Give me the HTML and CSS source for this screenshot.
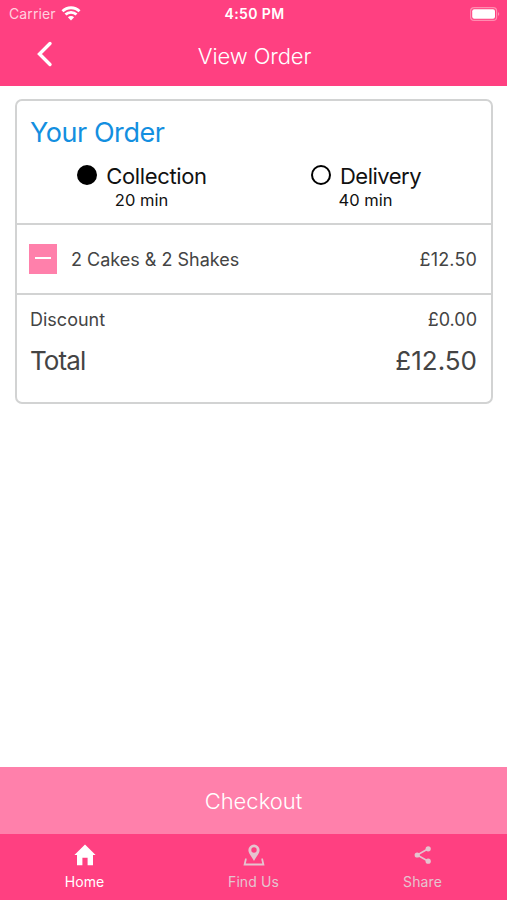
FILE: index.html
```html
<!DOCTYPE html>
<html lang="en">
<head>
    <meta charset="UTF-8">
    <meta name="viewport" content="width=device-width, initial-scale=1.0">
    <title>View Order</title>
    <link rel="stylesheet" href="styles.css">
</head>
<body>
    <header class="header">
        <div class="status">
            <div class="carrier">
                <span>Carrier</span>
                <svg width="20" height="15" viewBox="0 0 20 15" fill="none" stroke="#fff" stroke-width="2.8">
                    <path d="M1.5 5.3 A12 12 0 0 1 18.5 5.3"/>
                    <path d="M4.5 8.6 A7.8 7.8 0 0 1 15.5 8.6"/>
                    <path d="M10 14.4 L6.9 11.3 A4.4 4.4 0 0 1 13.1 11.3 Z" fill="#fff" stroke="none"/>
                </svg>
            </div>
            <div class="time">4:50 PM</div>
            <div class="battery">
                <svg width="30" height="14" viewBox="0 0 30 14">
                    <rect x="0.6" y="0.6" width="26" height="12.8" rx="3.5" fill="none" stroke="#ff8db0" stroke-width="1.2"/>
                    <rect x="2.2" y="2.2" width="22.8" height="9.6" rx="2" fill="#fff"/>
                    <path d="M28 5 Q30.5 7 28 9 Z" fill="#ff8db0"/>
                </svg>
            </div>
        </div>
        <div class="title-bar">
            <button class="back">
                <svg width="16" height="26" viewBox="0 0 16 26" fill="none" stroke="#fff" stroke-width="3.4" stroke-linecap="round">
                    <path d="M13 2.5 L2.5 13 L13 23.5"/>
                </svg>
            </button>
            <h1>View Order</h1>
        </div>
    </header>

    <main class="content">
        <div class="card">
            <section class="order">
                <h2>Your Order</h2>
                <div class="options">
                    <div class="option collection">
                        <div class="choice"><span class="radio checked"></span>Collection</div>
                        <div class="wait">20 min</div>
                    </div>
                    <div class="option delivery">
                        <div class="choice"><span class="radio"></span>Delivery</div>
                        <div class="wait">40 min</div>
                    </div>
                </div>
            </section>
            <section class="item">
                <button class="remove"><span class="minus"></span></button>
                <span class="name">2 Cakes &amp; 2 Shakes</span>
                <span class="price">£12.50</span>
            </section>
            <section class="totals">
                <div class="row"><span>Discount</span><span>£0.00</span></div>
                <div class="row total"><span>Total</span><span class="sum">£12.50</span></div>
            </section>
        </div>
    </main>

    <button class="checkout">Checkout</button>

    <nav class="tabs">
        <a class="tab active">
            <svg width="22" height="22" viewBox="0 0 22 22" fill="currentColor">
                <path d="M11 0.5 L21.6 11 H19 V21.2 H13.6 V13.8 H8.4 V21.2 H3 V11 H0.4 Z"/>
            </svg>
            <span>Home</span>
        </a>
        <a class="tab">
            <svg width="22" height="22" viewBox="0 0 22 22">
                <path d="M11 0.5 A5.6 5.6 0 0 1 16.6 6.1 C16.6 9.5 13.5 12.5 11 17 C8.5 12.5 5.4 9.5 5.4 6.1 A5.6 5.6 0 0 1 11 0.5 Z M11 3.3 A2.7 2.7 0 1 0 11 8.7 A2.7 2.7 0 1 0 11 3.3 Z" fill="currentColor" fill-rule="evenodd"/>
                <path d="M3.6 15.3 H2.8 L1.6 20.5 H20.4 L19.2 15.3 H18.4" fill="none" stroke="currentColor" stroke-width="1.8"/>
            </svg>
            <span>Find Us</span>
        </a>
        <a class="tab">
            <svg width="22" height="22" viewBox="0 0 22 22" fill="currentColor">
                <path d="M16.2 4.8 L5.2 11 L16.2 17.2" fill="none" stroke="currentColor" stroke-width="1.6"/>
                <circle cx="16.2" cy="4.8" r="2.6"/>
                <circle cx="5.2" cy="11" r="2.6"/>
                <circle cx="16.2" cy="17.2" r="2.6"/>
            </svg>
            <span>Share</span>
        </a>
    </nav>
</body>
</html>
```
FILE: styles.css
```css
* {
    box-sizing: border-box;
}
body {
    margin: 0;
    height: 900px;
    display: flex;
    flex-direction: column;
    font-family: Inter, "Liberation Sans", sans-serif;
    background-color: #fff;
    color: #444;
}
button {
    border: none;
    padding: 0;
    background: none;
    font-family: inherit;
    cursor: pointer;
}
svg {
    display: block;
}

/* Header */
.header {
    height: 86px;
    background-color: #ff4081;
    color: #fff;
}
.status {
    display: grid;
    grid-template-columns: 1fr auto 1fr;
    align-items: center;
    height: 27px;
    padding: 0 7px 0 9px;
    font-size: 14px;
}
.carrier {
    display: flex;
    align-items: center;
    gap: 5px;
    letter-spacing: 0.1px;
    color: #ffd0df;
}
.time {
    font-weight: 600;
    font-size: 14px;
    letter-spacing: 0.4px;
}
.battery {
    justify-self: end;
}
.title-bar {
    display: grid;
    grid-template-columns: 60px 1fr 58px;
    align-items: center;
    height: 56px;
}
.back {
    justify-self: end;
    margin-right: 7px;
    margin-bottom: 2px;
    color: #fff;
}
.title-bar h1 {
    margin: 0;
    padding-top: 1px;
    text-align: center;
    font-size: 22px;
    font-weight: 300;
    letter-spacing: -0.1px;
}

/* Order card */
.content {
    flex: 1;
    padding: 13px 14px 0 15px;
}
.card {
    height: 305px;
    border: 2px solid #d2d3d3;
    border-radius: 7px;
}
.order {
    height: 124px;
    padding: 14px 13px 0;
    border-bottom: 2px solid #d2d3d3;
}
.order h2 {
    margin: 0;
    line-height: 36px;
    font-size: 27px;
    font-weight: 400;
    letter-spacing: -0.45px;
    color: #138fe0;
}
.options {
    display: grid;
    grid-template-columns: 1fr 1fr;
    padding-top: 11px;
    color: #111;
}
.option {
    display: flex;
    flex-direction: column;
    align-items: center;
}
.choice {
    display: flex;
    align-items: center;
    gap: 9px;
    line-height: 28px;
    font-size: 22px;
    letter-spacing: -0.35px;
}
.delivery .choice {
    letter-spacing: -0.5px;
}
.radio {
    width: 20px;
    height: 20px;
    margin-bottom: 2px;
    border: 2px solid #000;
    border-radius: 50%;
}
.radio.checked {
    background-color: #000;
}
.wait {
    padding-right: 1px;
    line-height: 20px;
    font-size: 16.5px;
}
.item {
    display: flex;
    align-items: center;
    height: 70px;
    padding: 0 14px 0 12px;
    border-bottom: 2px solid #d2d3d3;
    font-size: 18px;
}
.price {
    letter-spacing: 0.15px;
}
.remove {
    display: flex;
    justify-content: center;
    width: 28px;
    height: 30px;
    padding-top: 13px;
    background-color: #ff80ab;
}
.minus {
    width: 16px;
    height: 2px;
    background-color: #fff;
}
.name {
    flex: 1;
    margin-left: 14px;
}
.totals {
    padding: 10px 14px 0 13px;
}
.row {
    display: flex;
    justify-content: space-between;
    line-height: 30px;
    font-size: 18px;
}
.row.total {
    line-height: 52px;
    font-size: 26px;
    letter-spacing: -0.9px;
}
.row .sum {
    letter-spacing: 0;
}

/* Bottom bars */
.checkout {
    height: 67px;
    background-color: #ff80ab;
    color: #fff;
    font-size: 22px;
    font-weight: 300;
}
.tabs {
    display: grid;
    grid-template-columns: repeat(3, 1fr);
    height: 66px;
    background-color: #ff4081;
}
.tab {
    display: flex;
    flex-direction: column;
    align-items: center;
    gap: 7px;
    padding-top: 10px;
    color: #e5c4cf;
    font-size: 14px;
    letter-spacing: 0.1px;
}
.tab.active {
    color: #fff;
}
```
